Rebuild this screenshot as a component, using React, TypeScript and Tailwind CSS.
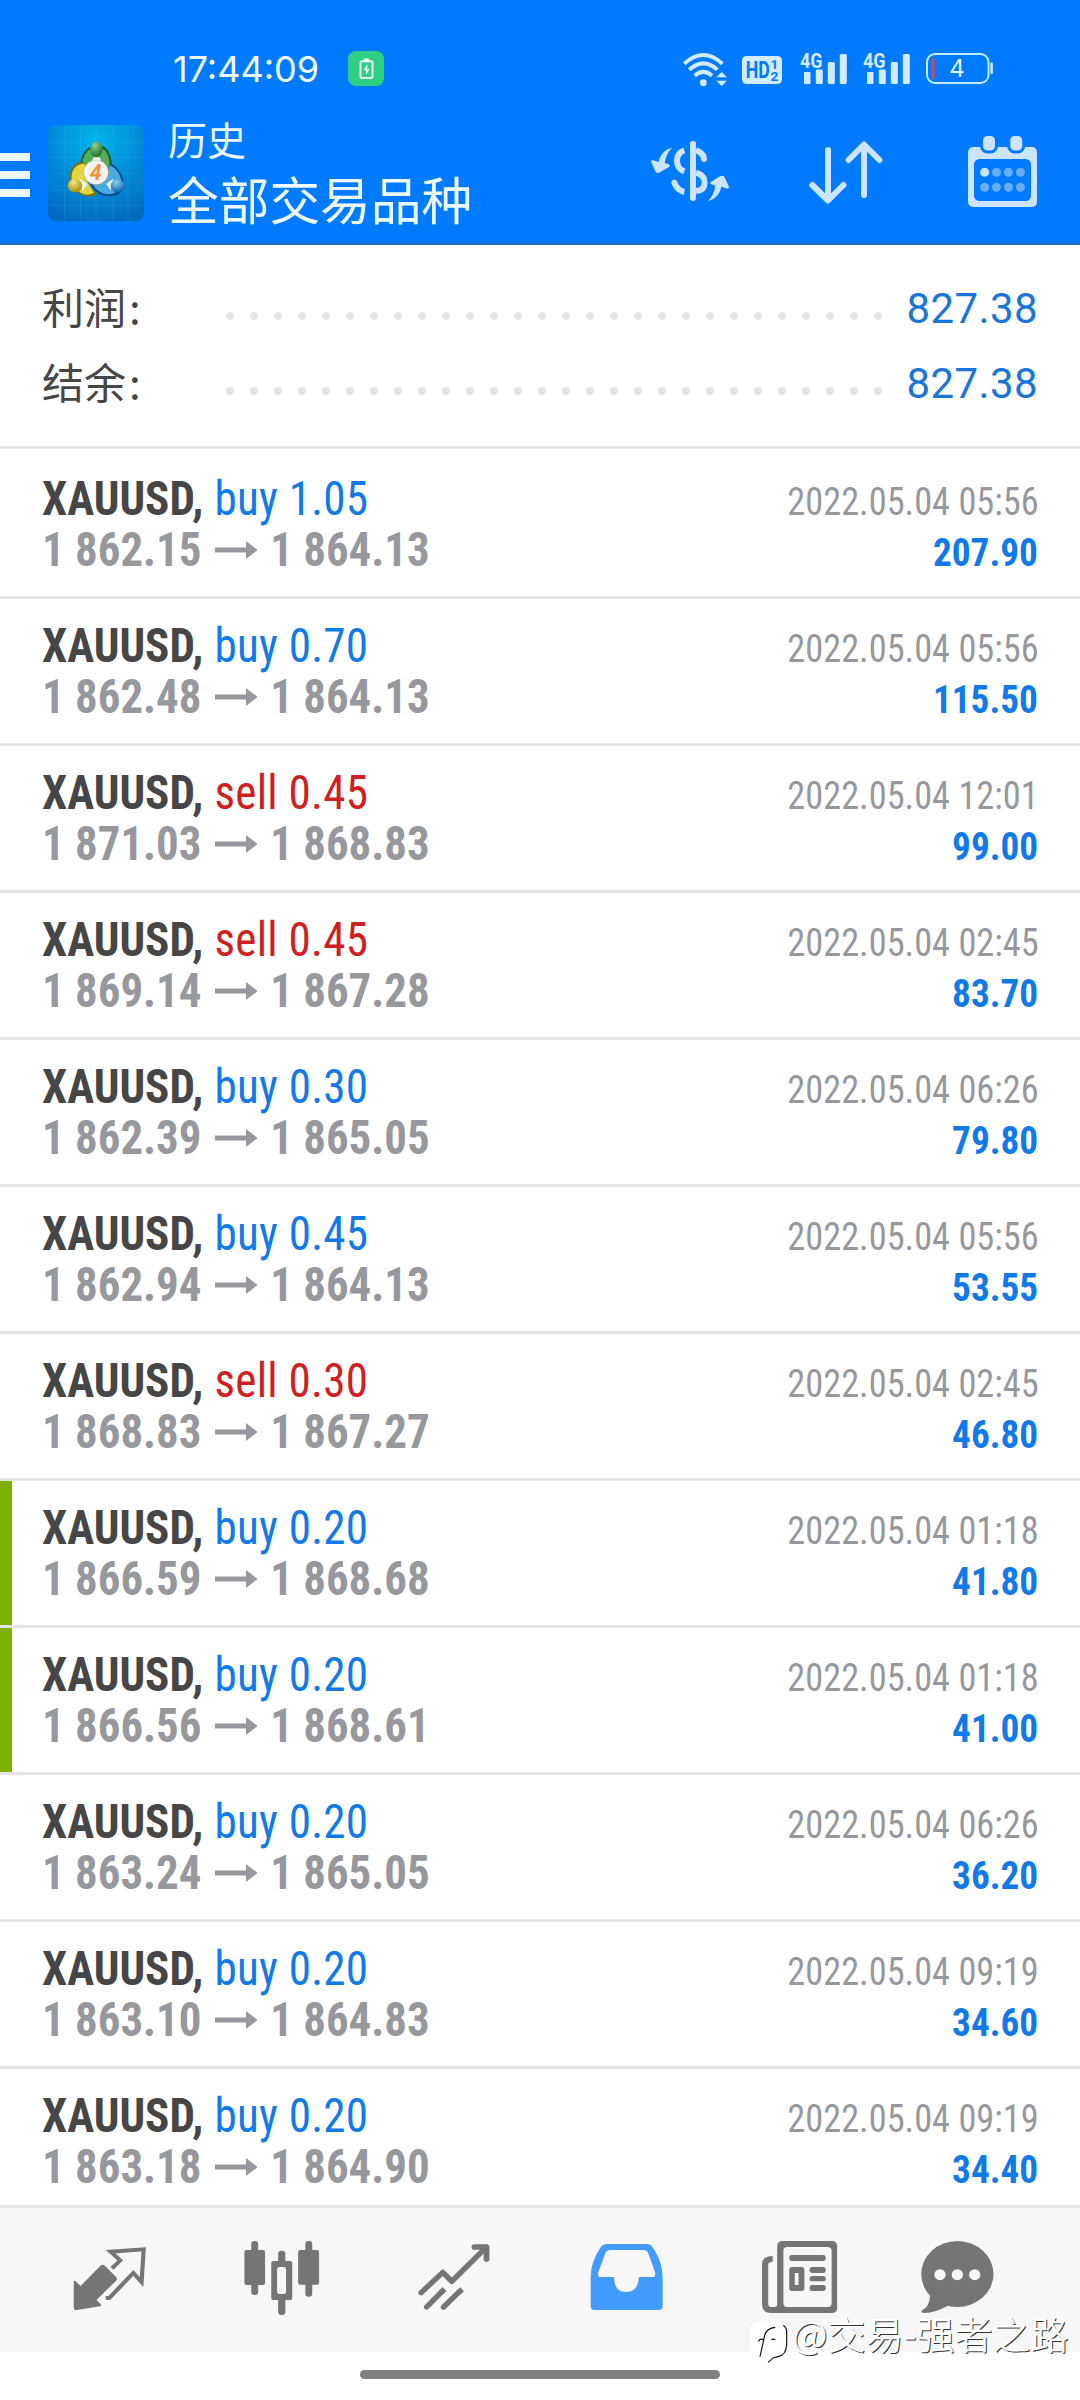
import type { ReactNode } from "react";

type Deal = {
  side: "buy" | "sell";
  lots: string;
  from: string;
  to: string;
  time: string;
  profit: string;
  marked?: boolean;
};

const deals: Deal[] = [
  { side: "buy", lots: "1.05", from: "1 862.15", to: "1 864.13", time: "2022.05.04 05:56", profit: "207.90" },
  { side: "buy", lots: "0.70", from: "1 862.48", to: "1 864.13", time: "2022.05.04 05:56", profit: "115.50" },
  { side: "sell", lots: "0.45", from: "1 871.03", to: "1 868.83", time: "2022.05.04 12:01", profit: "99.00" },
  { side: "sell", lots: "0.45", from: "1 869.14", to: "1 867.28", time: "2022.05.04 02:45", profit: "83.70" },
  { side: "buy", lots: "0.30", from: "1 862.39", to: "1 865.05", time: "2022.05.04 06:26", profit: "79.80" },
  { side: "buy", lots: "0.45", from: "1 862.94", to: "1 864.13", time: "2022.05.04 05:56", profit: "53.55" },
  { side: "sell", lots: "0.30", from: "1 868.83", to: "1 867.27", time: "2022.05.04 02:45", profit: "46.80" },
  { side: "buy", lots: "0.20", from: "1 866.59", to: "1 868.68", time: "2022.05.04 01:18", profit: "41.80", marked: true },
  { side: "buy", lots: "0.20", from: "1 866.56", to: "1 868.61", time: "2022.05.04 01:18", profit: "41.00", marked: true },
  { side: "buy", lots: "0.20", from: "1 863.24", to: "1 865.05", time: "2022.05.04 06:26", profit: "36.20" },
  { side: "buy", lots: "0.20", from: "1 863.10", to: "1 864.83", time: "2022.05.04 09:19", profit: "34.60" },
  { side: "buy", lots: "0.20", from: "1 863.18", to: "1 864.90", time: "2022.05.04 09:19", profit: "34.40" },
];

function WifiIcon() {
  return (
    <svg className="mt-px h-[34px] w-[46px]" viewBox="157 33 138 102" fill="none" stroke="#d3ebff" strokeWidth="12">
      <path d="M164 68Q221 16 278 68" />
      <path d="M179 86Q221 48 263 86" />
      <path d="M195 104Q221 81 247 104" />
      <circle cx="221" cy="125" r="10" fill="#d3ebff" stroke="none" />
      <path d="M260 109 276 93 292 109ZM260 119 276 135 292 119Z" fill="#d3ebff" stroke="none" />
    </svg>
  );
}

function Signal() {
  return (
    <svg className="mt-px h-[33px] w-[47px] overflow-visible" viewBox="0 0 47 33" fill="#d3ebff">
      <text x="-1" y="15.700" fontSize="20.5" fontWeight="700" textLength="22.5" lengthAdjust="spacingAndGlyphs" className="font-[Roboto]">
        4G
      </text>
      <rect x="3" y="20" width="6.5" height="12" rx="1" />
      <rect x="14.800" y="17.5" width="7" height="14.5" rx="1" />
      <rect x="26.800" y="10" width="7" height="22" rx="1.5" />
      <rect x="38.800" y="2" width="7" height="30" rx="1.5" />
    </svg>
  );
}

function StatusBar() {
  return (
    <div className="flex h-[88px] items-start pt-[51px]">
      <span className="ml-[173px] -mt-[4px] w-[146px] font-[Inter] text-[36px] leading-[44px] text-[#effaff]">17:44:09</span>
      <span className="ml-[29px] flex h-[35px] w-[36px] items-center justify-center rounded-[8px] bg-[#2dd083]">
        <svg className="h-[22px] w-[15px]" viewBox="0 0 15 22" fill="none">
          <rect x="1.5" y="3.2" width="12" height="16.8" rx="1.2" stroke="#eafff6" strokeWidth="1.9" />
          <rect x="5" y="0.5" width="5" height="2.4" fill="#eafff6" />
          <path d="M8.4 6 4.4 12.3H7V17L10.6 10.7H8.2Z" fill="#eafff6" />
        </svg>
      </span>
      <div className="mr-[86px] ml-auto flex items-start">
        <WifiIcon />
        <svg className="mt-[5px] ml-[14px] h-[28px] w-[40px]" viewBox="0 0 40 28">
          <rect width="40" height="28" rx="4.5" fill="#d3ebff" />
          <g fill="#007aff" fontWeight="700" className="font-[Roboto]">
            <text x="3.8" y="22.3" fontSize="23.5" textLength="24" lengthAdjust="spacingAndGlyphs">HD</text>
            <text x="28.5" y="13.3" fontSize="13.5">1</text>
            <text x="28.5" y="24.8" fontSize="13.5">2</text>
          </g>
        </svg>
        <div className="ml-[18.5px] flex gap-[16px]">
          <Signal />
          <Signal />
        </div>
        <svg className="mt-[2px] ml-[15.5px] h-[31px] w-[68px]" viewBox="0 0 68 31">
          <rect x="1" y="1" width="61.5" height="29" rx="8" fill="none" stroke="#c3ebff" strokeWidth="2" />
          <rect x="64.3" y="9.5" width="2.6" height="11.5" rx="1.3" fill="#c3ebff" />
          <rect x="5" y="5" width="3.6" height="21" rx="1.8" fill="#c8475f" />
          <text x="31" y="24" fontSize="24" textAnchor="middle" fill="#e0f4ff" className="font-[Inter]">4</text>
        </svg>
      </div>
    </div>
  );
}

function AppLogo() {
  return (
    <svg className="mt-[37px] ml-[18px] size-[96px]" viewBox="144 45 288 288">
      <defs>
        <radialGradient id="tile" cx="0.5" cy="0.15" r="0.95">
          <stop offset="0" stopColor="#00b5ea" />
          <stop offset="0.5" stopColor="#028bd8" />
          <stop offset="1" stopColor="#0565bb" />
        </radialGradient>
        <radialGradient id="green" cx="0.4" cy="0.25" r="0.8">
          <stop offset="0" stopColor="#8fd08a" />
          <stop offset="1" stopColor="#146b26" />
        </radialGradient>
        <radialGradient id="gold" cx="0.4" cy="0.25" r="0.8">
          <stop offset="0" stopColor="#f4ea78" />
          <stop offset="1" stopColor="#9a8a08" />
        </radialGradient>
        <radialGradient id="azure" cx="0.4" cy="0.25" r="0.8">
          <stop offset="0" stopColor="#8bd0f8" />
          <stop offset="1" stopColor="#0a5ba6" />
        </radialGradient>
      </defs>
      <rect x="144" y="45" width="288" height="288" rx="24" fill="url(#tile)" />
      <path
        d="M194 48V330M241 48V330M288 48V330M339 48V330M384 48V330M147 98H429M147 143H429M147 192H429M147 241H429M147 286H429"
        stroke="#49b9ee"
        strokeOpacity="0.22"
        strokeWidth="3"
      />
      <path d="M242 188C236 150 250 108 290 106S340 150 334 192L308 226 288 170 262 182Z" fill="#17612a" />
      <path d="M247 184C242 152 256 113 290 112S333 150 328 188L306 216 290 160 268 162Z" fill="#57ad55" />
      <path d="M252 156C205 154 200 214 222 238S270 264 292 252L262 226Z" fill="#7e7108" />
      <path d="M254 161C212 160 206 210 226 234S266 256 282 248L262 216Z" fill="#e4d640" />
      <path d="M330 158C366 176 382 224 362 246S290 268 266 214L310 226Z" fill="#0b4f8c" />
      <path d="M330 166C360 180 374 220 356 240S296 258 276 218L312 218Z" fill="#4aabe4" />
      <path d="M281 142H299L304 154H275ZM237 204 262 222 247 242ZM340 206 318 222 332 240Z" fill="#eaf6f0" />
      <ellipse cx="289" cy="118" rx="19" ry="23" fill="url(#green)" />
      <ellipse cx="225" cy="227" rx="22" ry="20" fill="url(#gold)" />
      <ellipse cx="353" cy="227" rx="21" ry="20" fill="url(#azure)" />
      <circle cx="289" cy="188" r="38" fill="#9aa39a" />
      <circle cx="288" cy="187" r="36" fill="#f4f4f6" />
      <text x="287" y="210" fontSize="64" fontWeight="700" fontStyle="italic" textAnchor="middle" fill="#f58f35" className="font-[Roboto]">
        4
      </text>
    </svg>
  );
}

function CurrencyIcon() {
  const arrow =
    "M96 53C75 57 60 75 56 96L37 90Q31 90 35 100L47 126Q52 131 60 127L88 110Q92 106 86 103L74 99C76 80 84 66 96 53Z";
  return (
    <svg className="mt-[52px] h-[62px] w-[80px]" viewBox="30 30 240 186" fill="#cce4ff">
      <path d={arrow} />
      <path d={arrow} transform="rotate(180 150 133)" />
      <rect x="150" y="33" width="18" height="180" rx="8" />
      <g fill="none" stroke="#cce4ff" strokeWidth="18">
        <path d="M133 61Q111 68 111 92T133 124M168 61Q182 64 190 78M168 128Q194 136 194 158T168 183M105 163Q114 182 133 186" />
        <path d="M190 78 192 87M103 158 105 162" strokeLinecap="round" />
      </g>
    </svg>
  );
}

function SortIcon() {
  return (
    <svg className="mt-[52px] ml-[78px] h-[66px] w-[76px]" viewBox="808 140 76 66" fill="none" stroke="#cce4ff" strokeWidth="6" strokeLinecap="round" strokeLinejoin="round">
      <path d="M828 150V200M812.300 185 828 200.500 843.500 185M864 195V145M848.500 160 864 144.500 879.500 160" />
    </svg>
  );
}

function CalendarIcon() {
  return (
    <svg className="mt-[47px] ml-[83px] h-[73px] w-[71px]" viewBox="967 135 71 73">
      <rect x="968" y="147" width="69" height="60" rx="5" fill="#cce4ff" />
      <rect x="974" y="159" width="57" height="42" rx="5.5" fill="#007aff" />
      <g fill="#cce4ff" stroke="#007aff" strokeWidth="3">
        <rect x="981.500" y="134.500" width="15" height="17.500" rx="6" />
        <rect x="1008.700" y="134.500" width="15" height="17.500" rx="6" />
      </g>
      {[172.3, 187.3].map((y, r) =>
        [984.6, 996.4, 1008.4, 1020.4].map((x, c) => (
          <circle key={`${x}-${y}`} cx={x} cy={y} r="4.5" fill={r + c === 0 ? "#c6e3ff" : "#66afff"} />
        )),
      )}
    </svg>
  );
}

function Header() {
  return (
    <header className="h-[245px] border-b-[3px] border-[#1a70cf] bg-[#007aff]">
      <StatusBar />
      <div className="flex items-start">
        <div className="mt-[65px] flex w-[30px] flex-col gap-[10px]">
          <span className="h-[8px] bg-[#ebf9ff]" />
          <span className="h-[8px] bg-[#ebf9ff]" />
          <span className="h-[8px] bg-[#ebf9ff]" />
        </div>
        <AppLogo />
        <div className="mt-[31px] ml-[24px] font-['Noto_Sans_CJK_SC',sans-serif] font-normal text-[#ebfaff]">
          <div className="text-[39px] leading-[39px]">历史</div>
          <div className="mt-[15px] text-[50.700px] leading-[51px]">全部交易品种</div>
        </div>
        <div className="mr-[42px] ml-auto flex items-start">
          <CurrencyIcon />
          <SortIcon />
          <CalendarIcon />
        </div>
      </div>
    </header>
  );
}

function SummaryRow({ label, value }: { label: string; value: string }) {
  return (
    <div className="flex h-[75px] items-center">
      <span className="-mt-[5px] w-[184px] font-['Noto_Sans_CJK_SC',sans-serif] text-[42px] leading-[42px] font-[380] text-[#464646]">
        {label}
        <span className="ml-[3px]">:</span>
      </span>
      <span className="mt-[15px] flex gap-[16px]">
        {Array.from({ length: 28 }, (_, i) => (
          <span key={i} className="size-[8px] rounded-full bg-[#e4e4e4]" />
        ))}
      </span>
      <span className="ml-auto text-[42px] leading-[42px] tracking-[0.400px] text-[#1976d8]">{value}</span>
    </div>
  );
}

function PriceArrow() {
  return (
    <svg className="mx-[14px] inline-block h-[18px] w-[45.500px] align-[7px]" viewBox="0 0 42.500 18" preserveAspectRatio="none" fill="#97989d">
      <path d="M0 6.500H31V0L42.500 9 31 18V11.500H0Z" />
    </svg>
  );
}

function DealRow({ deal, first, last }: { deal: Deal; first: boolean; last: boolean }) {
  return (
    <li
      className={`relative pr-[41px] pl-[42px] whitespace-nowrap [font-stretch:75%] ${
        first ? "h-[150px] pt-[24px]" : last ? "h-[136px] pt-[21px]" : "h-[147px] pt-[21px]"
      } ${last ? "" : "border-b-[3px] border-[#e4e4e4]"}`}
    >
      {deal.marked && <span className="absolute top-0 left-0 h-full w-[12px] bg-[#7db000]" />}
      <div className="flex h-[51px] items-baseline justify-between leading-[51px]">
        <span className="origin-left scale-x-[0.938] text-[48px]">
          <b className="font-bold text-[#464646]">XAUUSD,</b>
          <span className={`ml-[12px] tracking-[0.300px] ${deal.side === "buy" ? "text-[#117aea]" : "text-[#cf1f22]"}`}>
            {deal.side} {deal.lots}
          </span>
        </span>
        <span className="origin-right scale-x-[0.932] text-[39px] text-[#97989d]">{deal.time}</span>
      </div>
      <div className="flex h-[51px] items-baseline justify-between leading-[51px] font-bold">
        <span className="origin-left scale-x-[0.935] text-[48px] text-[#97989d]">
          {deal.from}
          <PriceArrow />
          {deal.to}
        </span>
        <span className="mr-px origin-right scale-x-[0.955] text-[39px] text-[#117aea]">{deal.profit}</span>
      </div>
    </li>
  );
}

function NavIcon({ className, viewBox, children }: { className: string; viewBox: string; children: ReactNode }) {
  return (
    <svg className={`mt-[32px] h-[76.700px] shrink-0 ${className}`} viewBox={viewBox} preserveAspectRatio="none" fill="#757575">
      {children}
    </svg>
  );
}

function BottomNav() {
  return (
    <nav className="flex h-[147px] items-start border-t-[3px] border-[#e4e4e4] bg-[#f7f7f7]">
      <NavIcon className="ml-[72.300px] w-[75.800px]" viewBox="210 180 220 230">
        <path d="M215 303Q219 301 222 305L235 318 292 258Q299 251 306 258L338 291Q343 296 338 302L281 360 293 372Q297 377 292 379L224 390Q215 391 215 380Z" />
        <path d="M326 265 350 241 322 215 418 208 412 306 388 279 318 354H308" fill="none" stroke="#757575" strokeWidth="12" />
      </NavIcon>
      <NavIcon className="ml-[94.700px] w-[77.500px]" viewBox="705 180 225 230">
        <rect x="709" y="210" width="60" height="105" rx="6" />
        <rect x="729" y="183" width="20" height="162" rx="9" />
        <rect x="787" y="243" width="61" height="117" rx="6" />
        <rect x="807" y="212" width="21" height="193" rx="9" />
        <rect x="804" y="261" width="26" height="81" rx="7" fill="#f7f7f7" />
        <rect x="865" y="210" width="61" height="104" rx="6" />
        <rect x="886" y="183" width="20" height="167" rx="9" />
      </NavIcon>
      <NavIcon className="ml-[96.500px] w-[74px]" viewBox="1210 180 215 230">
        <g fill="none" stroke="#757575" strokeWidth="16" strokeLinecap="round">
          <path d="M1222 338 1285 277 1311 304 1410 203" strokeLinejoin="round" />
          <path d="M1377 201H1412V237" strokeWidth="17" strokeLinejoin="round" />
          <path d="M1238 381 1283 334M1287 381 1334 334" />
          <path d="M1280 337 1290 327M1330 338 1341 328" strokeLinecap="butt" />
        </g>
      </NavIcon>
      <NavIcon className="ml-[99.200px] w-[74px]" viewBox="145 180 215 230">
        <path
          fill="#449bff"
          fillRule="evenodd"
          d="M147 290Q148 244 175 203Q182 192 194 192H312Q321 192 328 203Q355 244 356 290V378Q356 390 345 390H158Q147 390 147 378ZM190 219Q194 210 204 210H300Q310 210 314 219L334 277Q337 291 326 291H287Q285 336 250 336T215 291H177Q166 291 169 277Z"
        />
      </NavIcon>
      <NavIcon className="ml-[97.400px] w-[77.500px]" viewBox="643 180 225 230">
        <path
          fillRule="evenodd"
          d="M707 183H848Q864 183 864 199V383Q864 399 848 399H672Q646 399 646 372V252Q646 228 677 228V245Q664 245 664 253V372Q664 381 673 381H682Q690 381 690 373V199Q690 183 707 183ZM719 201Q708 201 708 212V370Q708 381 719 381H837Q848 381 848 370V212Q848 201 837 201Z"
        />
        <rect x="725" y="225" width="106" height="18" rx="8" />
        <path fillRule="evenodd" d="M733 261H761Q769 261 769 269V325Q769 333 761 333H733Q725 333 725 325V269Q725 261 733 261ZM741 279V315H752V279Z" />
        <rect x="784" y="261" width="47" height="18" rx="8" />
        <rect x="784" y="288" width="47" height="16" rx="8" />
        <rect x="784" y="315" width="47" height="18" rx="8" />
      </NavIcon>
      <NavIcon className="ml-[81.600px] w-[74.700px]" viewBox="1105 180 217 230">
        <ellipse cx="1213.500" cy="282" rx="105" ry="99" />
        <path d="M1122 330Q1134 342 1134 350Q1132 380 1112 390Q1105 399 1118 399Q1150 398 1186 377L1190 330Z" />
        <g fill="#f7f7f7">
          <circle cx="1163" cy="284" r="16.500" />
          <circle cx="1213.500" cy="284" r="16.500" />
          <circle cx="1264" cy="284" r="16.500" />
        </g>
      </NavIcon>
    </nav>
  );
}

function Watermark() {
  return (
    <div className="absolute top-[2312px] left-[749px] flex items-start">
      <svg className="mt-[7px] h-[46px] w-[42px]" viewBox="27 57 126 138" fill="none">
        <path d="M60 62H115Q139 66 140 95V130Q140 165 110 171H100L84 186 80 172H55Q30 168 30 140V92Q32 64 60 62Z" fill="#fff" />
        <path d="M60 170 74 106Q80 84 106 82M55 124 60 118H72M94 118H106M130 76Q141 84 140 100V135Q138 166 114 170L101 173 84 187" stroke="#111" strokeWidth="3.500" />
      </svg>
      <span className="ml-[1px] whitespace-nowrap font-['Noto_Sans_CJK_SC',sans-serif] text-[38px] leading-[42px] font-[350] text-white [text-shadow:1px_1px_0.500px_#333]">
        @交易-强者之路
      </span>
    </div>
  );
}

export default function App() {
  return (
    <div className="relative flex h-[2400px] w-[1080px] flex-col overflow-hidden bg-white font-[Roboto,sans-serif]">
      <Header />
      <section className="h-[204px] border-b-[3px] border-[#e4e4e4] px-[42px] pt-[26px]">
        <SummaryRow label="利润" value="827.38" />
        <SummaryRow label="结余" value="827.38" />
      </section>
      <ul className="h-[1756px] overflow-hidden">
        {deals.map((deal, i) => (
          <DealRow key={i} deal={deal} first={i === 0} last={i === deals.length - 1} />
        ))}
      </ul>
      <BottomNav />
      <div className="mx-auto mt-[18px] h-[9px] w-[360px] rounded-full bg-[#808080]" />
      <Watermark />
    </div>
  );
}
